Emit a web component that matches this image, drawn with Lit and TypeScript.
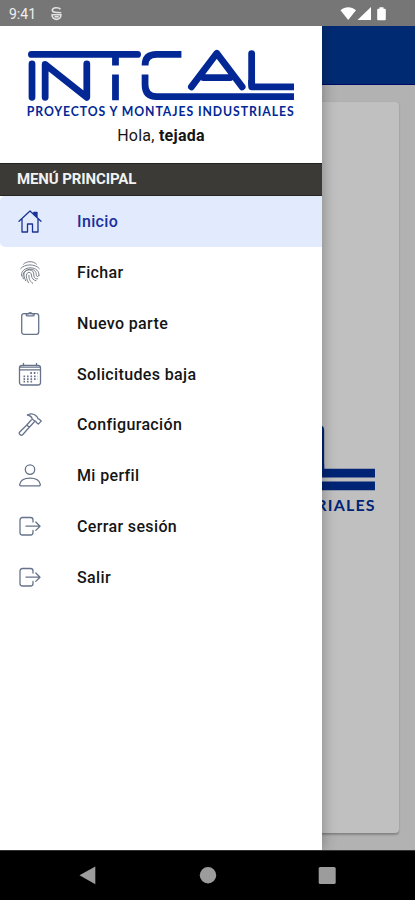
import { LitElement, html, css, svg } from "lit";
import { customElement } from "lit/decorators.js";

const ICONS: Record<string, unknown> = {
  home: svg`<path d="M1 12.300 12 2l11 10.300M4 9.800v13.200h5.500v-8h5v8h5.500V9.800"/><path class="fill" d="M15.800 3.300h3.200v4.700l-3.200-2.700z"/>`,
  finger: svg`<g class="thin"><path d="M5.500 4.200C8.500.8 15.500.8 18.500 4.200M2.700 8.600C6.500 3.600 17.500 3.600 21.300 8.600M3.600 16C1.500 5.500 22.300 4.500 21 15.800M5.300 18.800C1.700 8.200 18.500 5.800 18.300 14.800 18.300 17.300 20.500 17 20.700 15.300M7.700 20.800C3.500 12.300 7.500 9.900 11.200 9.900c3.500 0 4.700 2.400 4.600 5.100 0 3.200 2.800 4.700 4 3.700M10.500 22.800C6.800 16.500 8.400 12.400 11 12.400c2.500 0 2.400 2.300 2.600 3.800 .3 2.200 1.900 4.100 4.400 4.500M14.700 23.300c-3.200-2-4-5.500-3.800-8"/></g>`,
  clip: svg`<rect x="3.700" y="2.600" width="17" height="20.700" rx="2.300"/><path d="M8.200 2.800v.900c0 .8.500 1.200 1.200 1.200h5.600c.7 0 1.200-.4 1.200-1.200v-.9h-2.100c-.4-1.600-3.400-1.600-3.800 0z"/>`,
  calendar: svg`<rect x="1.500" y="3.300" width="21" height="19.700" rx="2.500"/><path d="M1.500 7.900h21M5.500 1.500v2M18.500 1.500v2M2 5.200h20"/><path class="dots" d="M12.300 11h7.500M5.500 14.400h14.300M5.500 17.200h14.300M5.500 19.700h10"/>`,
  hammer: svg`<path d="M9.300 3c3.500-1.700 7-1.200 9.200 1.200l1.300 1.600c-.2 1 .3 1.300 1.200 1.300l2.200 2-2.900 3-2.200-1.800c.1-1-.5-1.500-1.400-1.300l-2.500-2.100c-.4-2-1.900-3.300-4.900-3.900zM13.200 8l-4.400 5-7.300 7.200c-1 1.600 1.200 3.800 2.900 2.800l6.900-7.800 4.900-5.200M8.800 13l2.500 2.200"/>`,
  person: svg`<circle cx="12" cy="6.600" r="4.700"/><path d="M1.700 21.400c.7-4.100 5-6.300 10.300-6.300s9.600 2.200 10.300 6.300c.1 1-.5 1.500-1.400 1.500H3.100c-.9 0-1.500-.5-1.400-1.500z"/>`,
  exit: svg`<path d="M15 8V6c0-1.500-.9-2.500-2.400-2.500H4.400C2.900 3.500 2 4.500 2 6v12.500C2 20 2.900 21 4.400 21h8.200c1.500 0 2.400-1 2.400-2.500v-2M8 12.200h14M17.800 8l4.200 4.200-4.200 4.200"/>`,
};

const ITEMS = [
  ["home", "Inicio"],
  ["finger", "Fichar"],
  ["clip", "Nuevo parte"],
  ["calendar", "Solicitudes baja"],
  ["hammer", "Configuración"],
  ["person", "Mi perfil"],
  ["exit", "Cerrar sesión"],
  ["exit", "Salir"],
];

@customElement("intcal-logo")
class IntcalLogo extends LitElement {
  static styles = css`
    :host { display: block; }
    svg { display: block; width: 100%; overflow: visible; }
    .line { fill: none; stroke: var(--logo, #032896); stroke-width: 6.8; stroke-linejoin: round; stroke-linecap: round; }
    .flat { stroke-linecap: butt; }
    text { fill: var(--logo, #032896); font: 700 12.3px Lato, sans-serif; }
  `;
  render() {
    return html`<svg viewBox="0 0 267 68">
      <g class="line">
        <path d="M3.400 4.500H110M4 13.900V47.500M17.200 47.500V14.500L59 47.500V13.900" />
        <path d="M164 37 189.500 3.300 215 37M176 27.700H203" />
        <path d="M224.500 3.600V34" />
      </g>
      <g class="line flat">
        <path d="M87.800 5V15.500M87.800 24.500V50.500" />
        <path d="M117.500 15.500Q117.500 4.500 129 4.500H154M117.500 24.500V35Q117.500 46.900 129 46.900H267" />
        <path d="M224.500 30V37H267" />
      </g>
      <text x="-1.300" y="66.500" textLength="268" lengthAdjust="spacing">PROYECTOS Y MONTAJES INDUSTRIALES</text>
    </svg>`;
  }
}

@customElement("app-root")
class AppRoot extends LitElement {
  static styles = css`
    :host { display: block; height: 900px; font-family: Roboto, sans-serif; }
    * { box-sizing: border-box; }
    .screen { position: relative; display: flex; flex-direction: column; width: 415px; height: 900px; overflow: hidden; background: #b2b2b2; }
    .status { height: 26px; flex: none; background: #767676; display: flex; align-items: center; padding: 1px 27px 0 9px; color: #efefef; font-size: 14px; }
    .status .face { margin-left: 14px; }
    .status .radio { margin-left: auto; }
    .bar { height: 58.500px; flex: none; background: #002b73; border-bottom: 1.500px solid #000b65; }
    .page { flex: 1; padding: 17.500px 16px 16px; }
    .card { height: 100%; border-radius: 4px; background: #c0c0c0; box-shadow: 0 1px 2px #6668; padding: 323px 24px 0 12px; border-bottom: 1px solid #858585; }
    .card intcal-logo { --logo: #002475; width: 347px; }
    .nav { height: 50px; flex: none; background: #000; border-top: 1px solid #333; }
    .nav svg { display: block; }
    .drawer { position: absolute; left: 0; top: 26px; width: 322px; height: 824px; background: #fff; box-shadow: 0 0 14px #0005; clip-path: inset(0 -30px 0 0); }
    .head { height: 137px; padding: 24px 28px 0; }
    .hello { text-align: center; font-size: 16px; line-height: 20px; margin-top: 8.500px; color: #151515; letter-spacing: .25px; }
    .hello b { font-weight: 700; }
    .title { height: 33px; background: #3b3a37; border-top: 1px solid #222; border-bottom: 1px solid #25241f; color: #f2f2f2; font-size: 15px; font-weight: 700; line-height: 30px; padding-left: 17px; letter-spacing: -.12px; }
    .item { height: 50.750px; display: flex; align-items: center; gap: 35px; padding-left: 18px; font-size: 16px; font-weight: 500; color: #151515; letter-spacing: .36px; border-radius: 5px 0 0 5px; }
    .item span { padding-top: 1px; }
    .item.on { background: #e2eafe; color: #1b2f9b; }
    .item svg { width: 24px; height: 24px; flex: none; fill: none; stroke: #66738a; stroke-width: 1.300; stroke-linejoin: round; stroke-linecap: round; }
    .item.on svg { stroke: #1b3395; }
    .item .fill { fill: #1b3395; }
    .thin { stroke-width: .9; stroke: #6c737e; }
    .dots { stroke-width: 1.800; stroke-dasharray: 1.600 1.900; stroke-linecap: butt; }
  `;
  render() {
    return html`<div class="screen">
      <div class="status">
        <span>9:41</span>
        <svg class="face" width="13" height="16" viewBox="0 0 13 16" fill="none" stroke="#e2e2e2" stroke-width="1.600">
          <path d="M10.500 3.300C9 1.300 2.500 1 2.300 4.300 2.500 6.300 5 6.600 11.300 6.800M2 8.500c0 6.500 9 6.500 9 0M1.500 8.700h10" />
          <path d="M4.500 10.800h4.200" />
        </svg>
        <svg class="radio" width="48" height="16" viewBox="0 0 48 16" fill="#fff">
          <path d="M.5 4.200C5 .3 11.500.3 16 4.200L8.200 14zM17.500 14 31 1v13zM39.500 2.700V1.300h4v1.400h1.300q1 0 1 1v9.600q0 1-1 1h-6.600q-1 0-1-1V3.700q0-1 1-1z" />
        </svg>
      </div>
      <div class="bar"></div>
      <div class="page"><div class="card"><intcal-logo></intcal-logo></div></div>
      <div class="nav">
        <svg width="415" height="49" viewBox="0 0 415 49" fill="#9c9c9c">
          <path d="M79.500 24.300 95.300 15.500V33.300z" />
          <circle cx="208" cy="24.300" r="8.200" />
          <rect x="318.700" y="16" width="17" height="17" rx="1.500" />
        </svg>
      </div>
      <div class="drawer">
        <div class="head">
          <intcal-logo></intcal-logo>
          <div class="hello">Hola, <b>tejada</b></div>
        </div>
        <div class="title">MENÚ PRINCIPAL</div>
        ${ITEMS.map(
          ([icon, label], i) => html`<div class="item ${i === 0 ? "on" : ""}">
            <svg viewBox="0 0 24 24">${ICONS[icon]}</svg><span>${label}</span>
          </div>`
        )}
      </div>
    </div>`;
  }
}
